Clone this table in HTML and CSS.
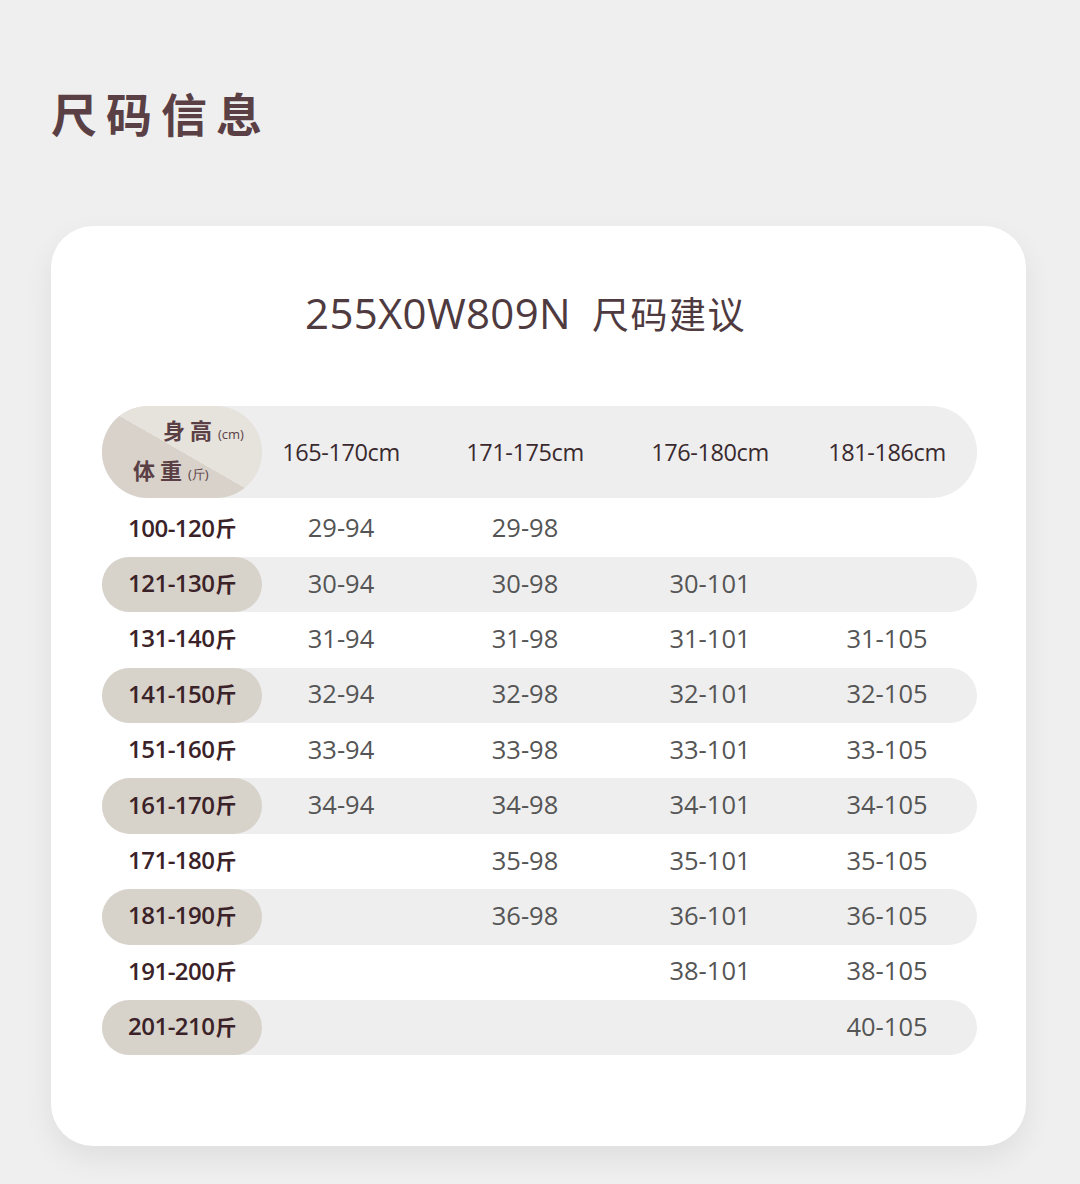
FILE: index.html
```html
<!DOCTYPE html>
<html lang="zh">
<head>
<meta charset="utf-8">
<link rel="stylesheet" href="styles.css">
</head>
<body>
<div class="page">
  <h1 class="title">尺码信息</h1>
  <div class="card">
    <h2 class="subtitle"><span class="code">255X0W809N</span><span class="cn">尺码建议</span></h2>
    <div class="table">
      <div class="row head">
        <div class="corner">
          <span class="h-top">身高<small>(cm)</small></span>
          <span class="h-bot">体重<small>(斤)</small></span>
        </div>
        <div class="hc">165-170cm</div>
        <div class="hc">171-175cm</div>
        <div class="hc">176-180cm</div>
        <div class="hc">181-186cm</div>
      </div>
      <div class="row first"><div class="lbl">100-120<i>斤</i></div><div class="v">29-94</div><div class="v">29-98</div><div class="v"></div><div class="v"></div></div>
      <div class="row alt"><div class="lbl">121-130<i>斤</i></div><div class="v">30-94</div><div class="v">30-98</div><div class="v">30-101</div><div class="v"></div></div>
      <div class="row"><div class="lbl">131-140<i>斤</i></div><div class="v">31-94</div><div class="v">31-98</div><div class="v">31-101</div><div class="v">31-105</div></div>
      <div class="row alt"><div class="lbl">141-150<i>斤</i></div><div class="v">32-94</div><div class="v">32-98</div><div class="v">32-101</div><div class="v">32-105</div></div>
      <div class="row"><div class="lbl">151-160<i>斤</i></div><div class="v">33-94</div><div class="v">33-98</div><div class="v">33-101</div><div class="v">33-105</div></div>
      <div class="row alt"><div class="lbl">161-170<i>斤</i></div><div class="v">34-94</div><div class="v">34-98</div><div class="v">34-101</div><div class="v">34-105</div></div>
      <div class="row"><div class="lbl">171-180<i>斤</i></div><div class="v"></div><div class="v">35-98</div><div class="v">35-101</div><div class="v">35-105</div></div>
      <div class="row alt"><div class="lbl">181-190<i>斤</i></div><div class="v"></div><div class="v">36-98</div><div class="v">36-101</div><div class="v">36-105</div></div>
      <div class="row"><div class="lbl">191-200<i>斤</i></div><div class="v"></div><div class="v"></div><div class="v">38-101</div><div class="v">38-105</div></div>
      <div class="row alt"><div class="lbl">201-210<i>斤</i></div><div class="v"></div><div class="v"></div><div class="v"></div><div class="v">40-105</div></div>
    </div>
  </div>
</div>
</body>
</html>
```

FILE: styles.css
```css
* { box-sizing: border-box; margin: 0; padding: 0; }
html, body { background: #efefef; }
body {
  font-family: "Open Sans", "Noto Sans CJK SC", sans-serif;
  width: 1080px;
  height: 1184px;
  overflow: hidden;
}
.page {
  padding: 82px 0 0 51px;
}
.title {
  font-family: "Noto Sans CJK SC", sans-serif;
  font-size: 46px;
  font-weight: 700;
  letter-spacing: 9px;
  color: #5a3f45;
  line-height: 60px;
  height: 60px;
}
.card {
  margin-top: 84px;
  width: 975px;
  height: 920px;
  background: #fff;
  border-radius: 42px;
  box-shadow: 0 12px 30px rgba(0, 0, 0, 0.07);
  padding: 62px 49px 0 51px;
}
.subtitle {
  font-weight: 400;
  line-height: 50px;
  color: #4e3a3f;
  display: flex;
  justify-content: center;
  align-items: baseline;
  gap: 21px;
  padding-right: 28px;
}
.code {
  font-family: "Open Sans", sans-serif;
  font-size: 42px;
  letter-spacing: 0.3px;
}
.cn {
  font-family: "Noto Sans CJK SC", sans-serif;
  font-size: 37px;
  letter-spacing: 1.5px;
}
.table {
  margin-top: 68px;
  width: 875px;
}
.row {
  display: grid;
  grid-template-columns: 160px 158px 210px 160px 187px;
  height: 55.4px;
  align-items: center;
}
.row.first {
  margin-top: 3.5px;
}
.row.alt {
  background: #eeeeee;
  border-radius: 28px;
}
.row.head {
  height: 92px;
  background: #eeeeee;
  border-radius: 46px;
}
.corner {
  position: relative;
  height: 92px;
  border-radius: 46px;
  background: linear-gradient(to bottom left, #e6e2dc 50%, #d8d2ca 50%);
  color: #5a3f45;
  font-family: "Noto Sans CJK SC", sans-serif;
  font-size: 22px;
  font-weight: 700;
}
.corner small {
  font-family: "Open Sans", sans-serif;
  font-size: 13px;
  font-weight: 400;
  letter-spacing: 0;
  margin-left: 1px;
}
.h-top { position: absolute; left: 61px; top: 7px; letter-spacing: 5px; }
.h-bot { position: absolute; left: 31px; top: 47px; letter-spacing: 5px; }
.hc {
  text-align: center;
  font-size: 23.5px;
  font-weight: 500;
  color: #3a2a2e;
  letter-spacing: -0.4px;
}
.hc:last-child { padding-left: 7px; }
.lbl {
  height: 100%;
  display: flex;
  align-items: center;
  justify-content: center;
  padding-bottom: 4px;
  font-size: 24px;
  font-weight: 600;
  color: #3b2228;
  letter-spacing: -0.5px;
}
.lbl i {
  font-style: normal;
  font-family: "Noto Sans CJK SC", sans-serif;
  font-size: 21px;
  font-weight: 700;
  margin-left: 1px;
}
.row.alt .lbl {
  background: #d7d2ca;
  border-radius: 28px;
}
.v {
  text-align: center;
  font-size: 25.5px;
  color: #555;
  padding-bottom: 4px;
}
.v:last-child { padding-left: 7px; }
```
